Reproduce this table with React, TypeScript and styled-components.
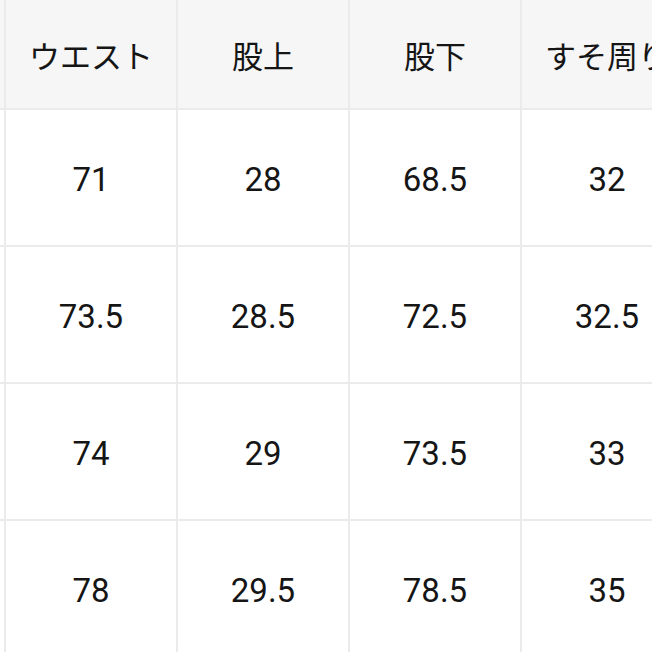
import React from 'react';
import styled, { createGlobalStyle } from 'styled-components';

const columns = ['ウエスト', '股上', '股下', 'すそ周り'];

const rows = [
  ['71', '28', '68.5', '32'],
  ['73.5', '28.5', '72.5', '32.5'],
  ['74', '29', '73.5', '33'],
  ['78', '29.5', '78.5', '35'],
];

const GlobalStyle = createGlobalStyle`
  html, body {
    margin: 0;
    padding: 0;
    background: #ffffff;
    overflow: hidden;
  }
  body {
    font-family: Roboto, "Noto Sans CJK JP", sans-serif;
    color: #151515;
  }
`;

const STable = styled.div`
  display: grid;
  grid-template-columns: 6px repeat(4, 172px);
  grid-auto-rows: 137px;
  grid-template-rows: 111px;
  width: 700px;
  margin-top: -1px;
`;

const SCell = styled.div<{ $head?: boolean }>`
  box-sizing: border-box;
  display: flex;
  align-items: center;
  justify-content: center;
  border-right: 2px solid #ebebeb;
  border-bottom: 2px solid #ebebeb;
  background: ${(p) => (p.$head ? '#f6f6f6' : '#ffffff')};
  font-family: ${(p) =>
    p.$head ? '"Noto Sans CJK JP", sans-serif' : 'Roboto, "Noto Sans", sans-serif'};
  font-size: ${(p) => (p.$head ? '31px' : '33px')};
  white-space: nowrap;
  padding-top: ${(p) => (p.$head ? '1px' : '4px')};
`;

export default function App() {
  return (
    <>
      <GlobalStyle />
      <STable>
        <SCell $head />
        {columns.map((c) => (
          <SCell key={c} $head>
            {c}
          </SCell>
        ))}
        {rows.map((row, r) => (
          <React.Fragment key={r}>
            <SCell />
            {row.map((v, i) => (
              <SCell key={i}>{v}</SCell>
            ))}
          </React.Fragment>
        ))}
      </STable>
    </>
  );
}
